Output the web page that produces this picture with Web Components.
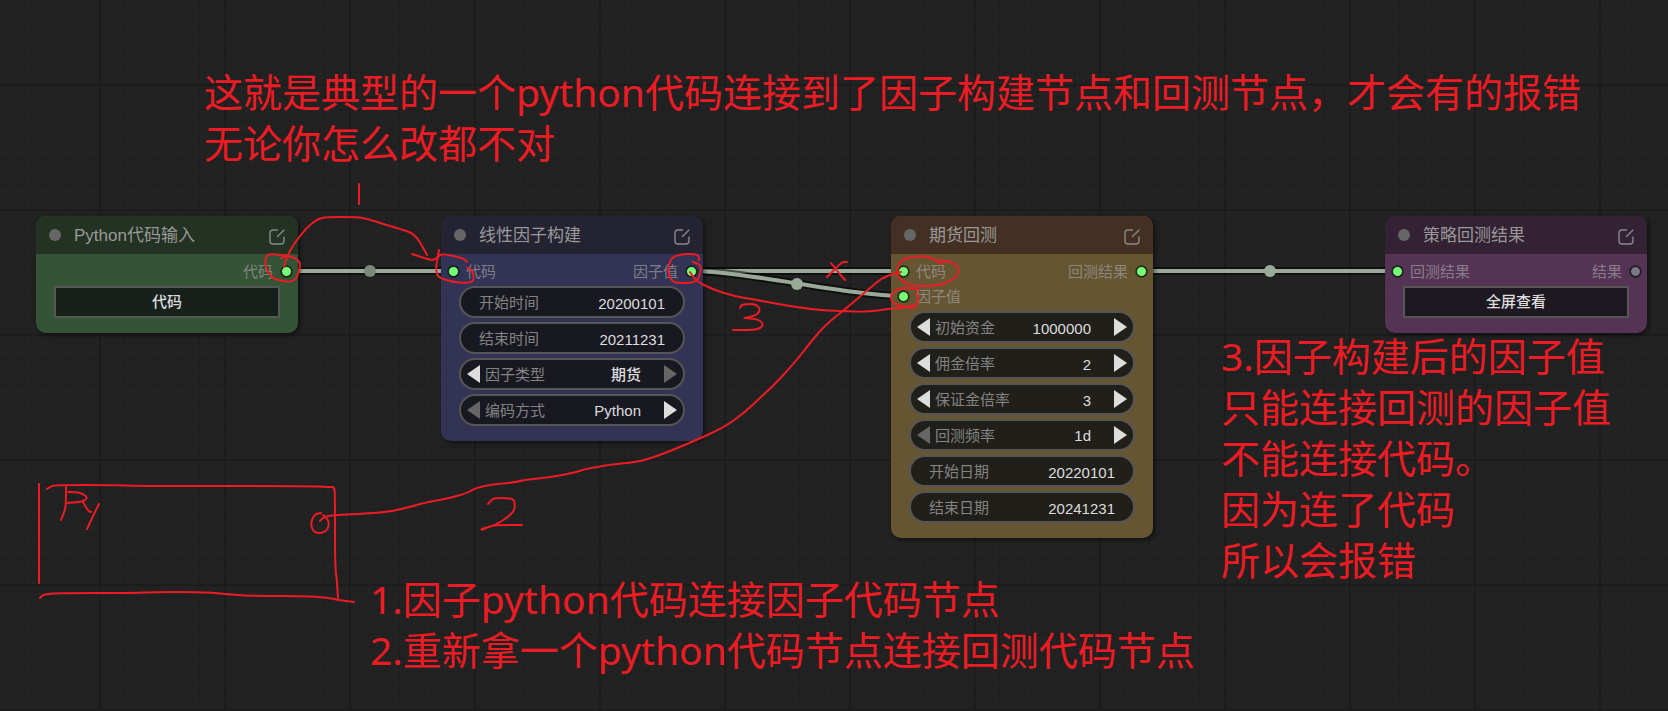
<!DOCTYPE html>
<html lang="zh-CN">
<head>
<meta charset="utf-8">
<meta name="viewport" content="width=device-width, initial-scale=1">
<title>工作流画布</title>
<style>
  html, body { margin: 0; min-height: 100vh; background: #222; }
  body { font-family: "Liberation Sans", "Noto Sans CJK SC", sans-serif; }
  flow-node, ink-note { position: absolute; }
</style>
</head>
<body>
<flow-canvas>
  <flow-links slot="links"></flow-links>

  <flow-node theme="green" heading="Python代码输入" style="left:36px;top:216px">
    <flow-port slot="out">代码</flow-port>
    <flow-button>代码</flow-button>
  </flow-node>

  <flow-node theme="blue" heading="线性因子构建" style="left:441px;top:216px">
    <flow-port slot="in">代码</flow-port>
    <flow-port slot="out">因子值</flow-port>
    <flow-field label="开始时间" value="20200101"></flow-field>
    <flow-field label="结束时间" value="20211231"></flow-field>
    <flow-field kind="combo" label="因子类型" value="期货" end="next"></flow-field>
    <flow-field kind="combo" label="编码方式" value="Python" end="prev"></flow-field>
  </flow-node>

  <flow-node theme="gold" heading="期货回测" style="left:891px;top:216px">
    <flow-port slot="in">代码</flow-port>
    <flow-port slot="in">因子值</flow-port>
    <flow-port slot="out">回测结果</flow-port>
    <flow-field kind="number" label="初始资金" value="1000000"></flow-field>
    <flow-field kind="number" label="佣金倍率" value="2"></flow-field>
    <flow-field kind="number" label="保证金倍率" value="3"></flow-field>
    <flow-field kind="combo" label="回测频率" value="1d" end="prev"></flow-field>
    <flow-field label="开始日期" value="20220101"></flow-field>
    <flow-field label="结束日期" value="20241231"></flow-field>
  </flow-node>

  <flow-node theme="purple" heading="策略回测结果" style="left:1385px;top:216px">
    <flow-port slot="in">回测结果</flow-port>
    <flow-port slot="out" idle>结果</flow-port>
    <flow-button>全屏查看</flow-button>
  </flow-node>

  <ink-layer slot="ink"></ink-layer>
  <ink-note slot="ink" style="left:204px;top:66px"><div>这就是典型的一个python代码连接到了因子构建节点和回测节点，才会有的报错</div><div>无论你怎么改都不对</div></ink-note>
  <ink-note slot="ink" style="left:1221px;top:330px"><div>3.因子构建后的因子值</div><div>只能连接回测的因子值</div><div>不能连接代码。</div><div>因为连了代码</div><div>所以会报错</div></ink-note>
  <ink-note slot="ink" style="left:370px;top:573px"><div>1.因子python代码连接因子代码节点</div><div>2.重新拿一个python代码节点连接回测代码节点</div></ink-note>
</flow-canvas>

<script>
const define = (name, html, setup) => {
  const template = document.createElement('template');
  template.innerHTML = html;
  customElements.define(name, class extends HTMLElement {
    connectedCallback() {
      if (this.shadowRoot) return;
      const root = this.attachShadow({ mode: 'open' });
      root.append(template.content.cloneNode(true));
      if (setup) setup(this, root);
    }
  });
};

/* Infinite canvas: a 125px major grid split in ten. */
define('flow-canvas', `
  <style>
    :host { display: block; position: relative; min-height: 100vh; overflow: hidden; background: #222; }
    .grid { position: absolute; inset: 0; width: 100%; height: 100%; }
  </style>
  <svg class="grid" aria-hidden="true">
    <defs>
      <pattern id="minor" width="12.5" height="12.5" patternUnits="userSpaceOnUse">
        <path d="M0 .5H12.5M.5 0V12.5" stroke="#1e1e1e" fill="none"/>
      </pattern>
      <pattern id="major" x="99" y="84" width="125" height="125" patternUnits="userSpaceOnUse">
        <rect width="125" height="125" fill="url(#minor)"/>
        <path d="M0 1H125M1 0V125" stroke="#1c1c1c" stroke-width="2" fill="none"/>
      </pattern>
    </defs>
    <rect width="100%" height="100%" fill="url(#major)"/>
  </svg>
  <slot name="links"></slot>
  <slot></slot>
  <slot name="ink"></slot>
`);

define('flow-links', `
  <style>
    :host { position: absolute; inset: 0; pointer-events: none; }
    svg { display: block; width: 100%; height: 100%; }
    .edge { fill: none; stroke: rgba(0,0,0,.55); stroke-width: 8; }
    .wire { fill: none; stroke: #9a9; stroke-width: 4; }
    circle { fill: #9a9; }
  </style>
  <svg aria-hidden="true">
    <path class="edge" d="M287 271H453M692 271H903M1142 271H1397"/>
    <path class="wire" d="M287 271H453M692 271H903M1142 271H1397"/>
    <path class="edge" d="M692 271C745 271 850 296 903 296"/>
    <path class="wire" d="M692 271C745 271 850 296 903 296"/>
    <circle cx="370" cy="271" r="6" style="fill:#7c8a7c"/>
    <circle cx="797" cy="284" r="6"/>
    <circle cx="1270" cy="271" r="6"/>
  </svg>
`);

define('flow-node', `
  <style>
    :host { display: block; width: 262px; border-radius: 10px; overflow: hidden;
      background: var(--body); box-shadow: 2px 2px 4px rgba(0,0,0,.5); }
    :host([theme=green])  { --head: #233223; --body: #355335; --well: #17201a; }
    :host([theme=blue])   { --head: #232332; --body: #333355; --well: #181820; }
    :host([theme=gold])   { --head: #433023; --body: #655533; --well: #201f19; }
    :host([theme=purple]) { --head: #332233; --body: #553355; --well: #1e1820; }
    header { display: flex; align-items: center; height: 38px; padding: 0 13px; box-sizing: border-box; background: var(--head); }
    .dot { width: 12px; height: 12px; border-radius: 50%; background: #666; flex: none; }
    h2 { flex: 1; margin: 0 0 0 13px; padding-top: 2px; font-size: 17px; line-height: 24px; font-weight: 400; color: #999; }
    .open { display: flex; margin: 3px 0 0; padding: 0; border: 0; background: none; color: #888; }
    .ports { display: flex; justify-content: space-between; padding: 5px 6px 2px; }
    .widgets { display: flex; flex-direction: column; gap: 4px; padding: 0 18px 15px; }
  </style>
  <header>
    <span class="dot"></span><h2></h2>
    <button class="open" aria-label="打开">
      <svg width="16" height="16" viewBox="0 0 16 16" fill="none" stroke="currentColor" stroke-width="1.4">
        <path d="M9 1H4Q1 1 1 4V12Q1 15 4 15H12Q15 15 15 12V7.500M8 8L15.300.800"/>
      </svg>
    </button>
  </header>
  <div class="ports"><div><slot name="in"></slot></div><div><slot name="out"></slot></div></div>
  <div class="widgets"><slot></slot></div>
`, (host, root) => { root.querySelector('h2').textContent = host.getAttribute('heading'); });

define('flow-port', `
  <style>
    :host { display: flex; align-items: center; gap: 7px; height: 25px; font-size: 15px; line-height: 25px; color: rgba(160,160,160,.7); }
    :host([slot=out]) { flex-direction: row-reverse; }
    i { width: 9px; height: 9px; border: 1px solid #0a140a; border-radius: 50%; background: #7f7; box-shadow: 0 0 0 1px rgba(0,0,0,.35); margin: 0 0 0 1px; flex: none; }
    :host([idle]) i { background: #778; }
  </style>
  <i></i><span><slot></slot></span>
`);

define('flow-button', `
  <style>
    :host { display: block; }
    button { display: block; width: 100%; height: 32px; padding: 0; border: 2px solid #565656; background: var(--well);
      color: #ddd; font: 500 15px/28px "Liberation Sans", "Noto Sans CJK SC", sans-serif; }
  </style>
  <button><slot></slot></button>
`);

define('flow-field', `
  <style>
    :host { display: flex; align-items: center; box-sizing: border-box; height: 32px; padding: 0 18px; border: 2px solid #565656;
      border-radius: 16px; background: var(--well); }
    :host([kind]) { padding: 0 6px; }
    label { flex: none; padding-top: 2px; font-size: 15px; line-height: 26px; color: #848484; }
    input, select { flex: 1; box-sizing: border-box; min-width: 0; width: 0; height: 28px; margin: 0; padding: 2px 0 0; border: 0; outline: 0; background: none; color: #ddd; opacity: 1;
      font: 500 15px/26px "Liberation Sans", "Noto Sans CJK SC", sans-serif; text-align: right; text-align-last: right; appearance: none; }
    button { display: none; padding: 0; border: 0; background: none; color: #ddd; }
    button:disabled { color: #666; }
    :host([kind]) button { display: flex; }
    :host([kind]) label { margin-left: 5px; }
    :host([kind]) .next { margin-left: 23px; }
  </style>
  <button class="prev" aria-label="上一个"><svg width="13" height="18"><path d="M13 0V18L0 9Z" fill="currentColor"/></svg></button>
  <label for="value"></label>
  <button class="next" aria-label="下一个"><svg width="13" height="18"><path d="M0 0V18L13 9Z" fill="currentColor"/></svg></button>
`, (host, root) => {
  const label = root.querySelector('label');
  const value = host.getAttribute('value');
  const combo = host.getAttribute('kind') === 'combo';
  const control = document.createElement(combo ? 'select' : 'input');
  label.textContent = host.getAttribute('label');
  control.id = 'value';
  if (combo) control.append(new Option(value, value));
  else control.value = value;
  label.after(control);
  if (host.hasAttribute('end')) root.querySelector('.' + host.getAttribute('end')).disabled = true;
});

define('ink-note', `
  <style>
    :host { display: block; color: #ed1c24; font: 400 39px/51px "Noto Sans", "Noto Sans CJK SC", sans-serif; white-space: nowrap; }
  </style>
  <slot></slot>
`);

/* Freehand pen strokes, each a list of sampled points. */
const strokes = [
  '359,184 359,204',
  '284,267 285,262 287,257 293,245 305,230 310,225 315,221 321,218 328,217 357,217 368,219 383,224 407,231 413,234 417,238 421,244 427,255',
  '412,254 427,259 432,260 436,259 438,256 439,250',
  '281,258 285,256 289,256 295,258 300,262 300,268 298,274 296,279 291,282 283,281 274,279 270,275 266,268 265,261 267,255 271,254 283,255 295,258',
  '467,262 465,259 458,257 444,254 439,255 437,260 436,268 437,275 440,278 453,282 465,283 472,282 474,279 473,273 471,269 467,268',
  '699,260 699,256 696,254 683,254 675,256 671,259 668,267 669,276 672,281 677,283 690,283 697,281 700,275 701,267 699,264 693,262',
  '690,272 693,277 698,282 712,289 733,296 757,300 783,305 817,310 840,311 868,312 887,309 900,308 908,307 913,305',
  '740,308 741,305 746,304 754,304 758,306 760,310 757,315 745,318 744,318 757,319 763,323 762,327 758,329 751,330 733,330',
  '827,277 833,271 840,264 843,262 847,262',
  '831,263 838,272 845,280',
  '939,260 952,262 957,266 959,270 957,276 950,281 941,285 927,286 914,286 903,282 898,277 897,270 899,263 904,259 911,257 924,256 932,258 942,264',
  '919,290 912,288 903,288 895,290 891,295 891,300 894,304 902,306 911,308 916,307 918,302 918,297 916,294',
  '320,521 322,518 328,516 336,515 357,514 388,512 410,507 423,503 450,498 467,493 472,490 477,488 488,485 517,482 523,480 553,477 577,472 585,469 598,467 607,465 637,462 655,457 690,443 725,427 745,412 760,398 776,383 796,361 810,343 820,331 830,321 843,311 870,288 882,278 893,274 901,272',
  '488,504 491,500 495,498 510,498 514,500 515,505 514,511 508,517 496,525 481,529 482,530 488,527 495,525 522,525',
  '39,484 39,583',
  '47,489 51,486 57,485 112,485 139,486 307,486 330,487 334,487 335,492 335,567 337,580 338,600',
  '40,598 42,595 48,594 57,593 137,593 152,592 204,592 225,594 250,596 307,596 330,598 338,600 354,602',
  '66,485 66,503 65,510 61,520',
  '68,492 77,492 83,494 87,497 86,500 80,502 66,503',
  '83,502 88,511 91,512',
  '99,504 93,516 87,529',
  '321,513 316,513 312,519 311,525 313,531 317,533 323,533 328,529 329,523 327,518 323,515'
];
const smooth = (text) => {
  const p = text.split(' ').map(s => s.split(',').map(Number));
  let d = 'M' + p[0];
  for (let i = 1; i < p.length - 1; i++) {
    d += 'Q' + p[i] + ' ' + [(p[i][0] + p[i + 1][0]) / 2, (p[i][1] + p[i + 1][1]) / 2];
  }
  return d + 'L' + p[p.length - 1];
};
define('ink-layer', `
  <style>
    :host { position: absolute; inset: 0; pointer-events: none; }
    svg { display: block; width: 100%; height: 100%; fill: none; stroke: #ed1c24; stroke-width: 2; stroke-linecap: round; stroke-linejoin: round; }
  </style>
  <svg aria-hidden="true"><path/></svg>
`, (host, root) => { root.querySelector('path').setAttribute('d', strokes.map(smooth).join('')); });
</script>
</body>
</html>
